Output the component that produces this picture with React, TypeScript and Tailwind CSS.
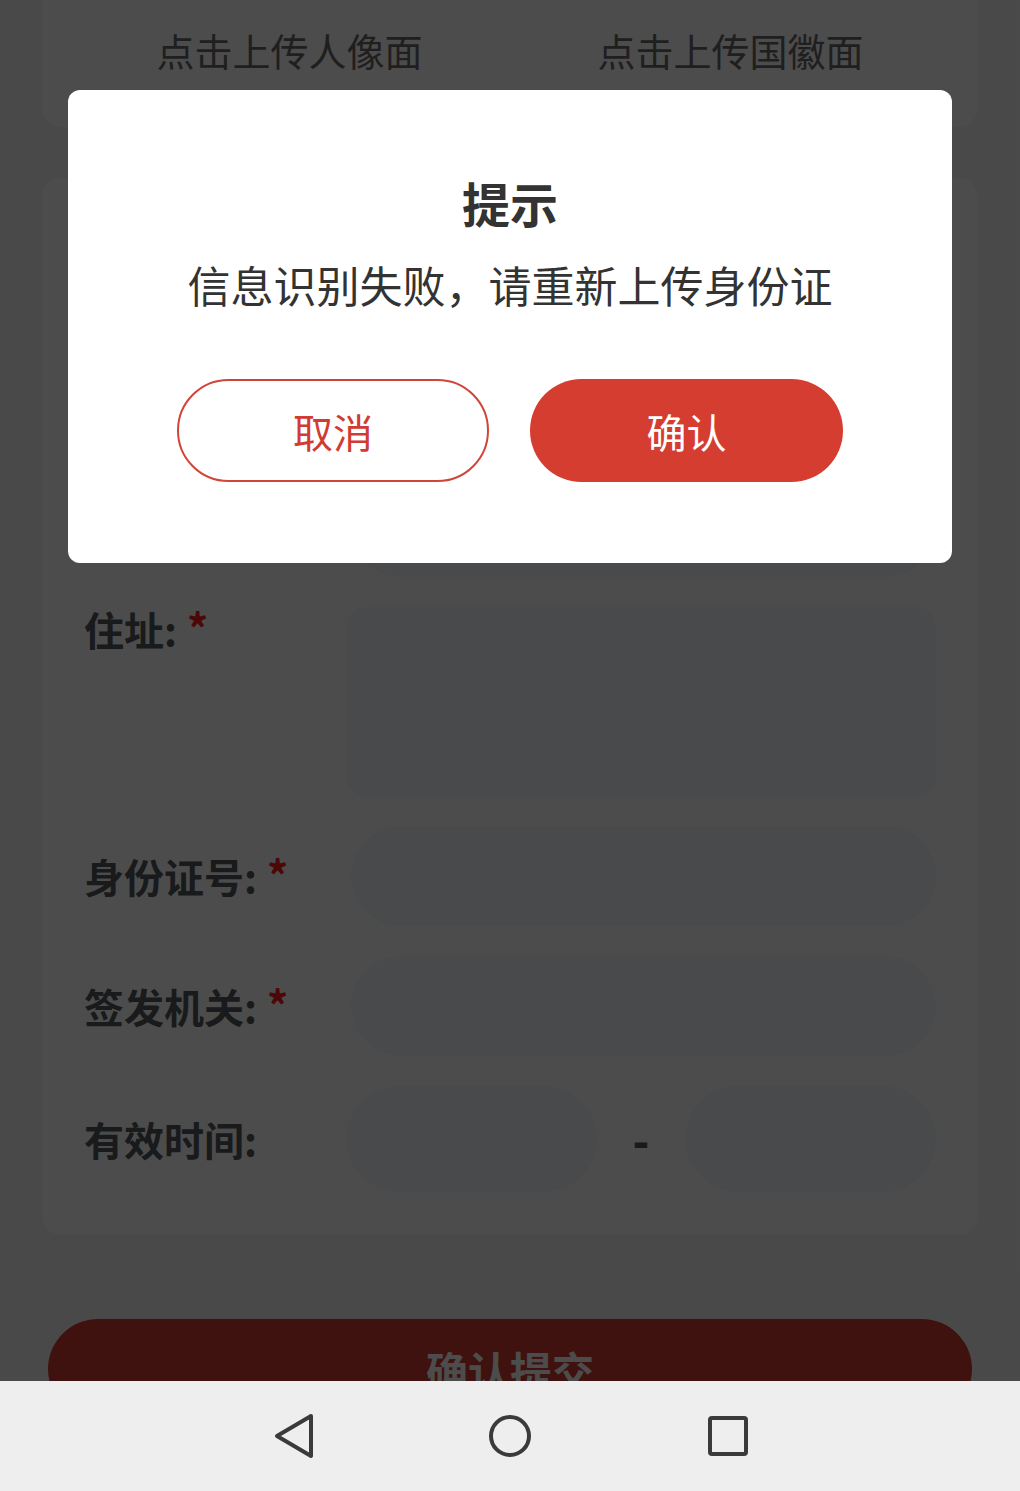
import { useState } from "react";

interface Field {
  label: string;
  required?: boolean;
  kind: "input" | "textarea" | "range";
}

const fields: Field[] = [
  { label: "姓名", required: true, kind: "input" },
  { label: "性别", required: true, kind: "input" },
  { label: "民族", required: true, kind: "input" },
  { label: "住址", required: true, kind: "textarea" },
  { label: "身份证号", required: true, kind: "input" },
  { label: "签发机关", required: true, kind: "input" },
  { label: "有效时间", kind: "range" },
];

function FormRow({ field }: { field: Field }) {
  const isArea = field.kind === "textarea";
  return (
    <div className={`flex ${isArea ? "items-start" : "items-center"}`}>
      <div className="flex w-[262px] shrink-0 items-start text-[40px] font-bold leading-[44px] text-[#55575b]">
        <span>{field.label}:</span>
        {field.required && (
          <span className="ml-[10px] text-[42px] leading-[40px] text-[#ff1a1a]">*</span>
        )}
      </div>

      {field.kind === "input" && (
        <input
          readOnly
          className="ml-[5px] h-[100px] flex-1 rounded-full bg-[#f5f7fa] px-[30px] text-[36px] outline-none"
        />
      )}
      {field.kind === "textarea" && (
        <textarea
          readOnly
          className="h-[189px] flex-1 resize-none rounded-[20px] bg-[#f5f7fa] p-[20px] text-[36px] outline-none"
        />
      )}
      {field.kind === "range" && (
        <div className="flex flex-1 items-center">
          <input
            readOnly
            className="h-[106px] min-w-0 flex-1 rounded-full bg-[#f5f7fa] px-[30px] outline-none"
          />
          <span className="w-[88px] text-center text-[44px] font-black leading-[44px] text-[#55575b]">-</span>
          <input
            readOnly
            className="h-[106px] min-w-0 flex-1 rounded-full bg-[#f5f7fa] px-[30px] outline-none"
          />
        </div>
      )}
    </div>
  );
}

export default function App() {
  const [open, setOpen] = useState(true);

  return (
    <div className="relative h-[1491px] w-full overflow-hidden bg-[#f6f6f6] font-['Noto_Sans_CJK_SC','Noto_Sans',sans-serif]">
      {/* page content (scrolled) */}
      <div className="h-[1381px] overflow-hidden px-[42px]">
        {/* upload card, top scrolled off */}
        <div className="flex h-[127px] justify-center gap-[175px] rounded-b-[20px] bg-white pt-[25px]">
          <span className="text-[38px] leading-[50px] text-[#6a6a6a]">点击上传人像面</span>
          <span className="text-[38px] leading-[50px] text-[#6a6a6a]">点击上传国徽面</span>
        </div>

        {/* info form */}
        <div className="mt-[51px] flex flex-col gap-[30px] rounded-[20px] bg-white pb-[43px] pl-[42px] pr-[42px] pt-[39px]">
          {fields.map((f) => (
            <FormRow key={f.label} field={f} />
          ))}
        </div>

        <button className="mx-[6px] mt-[84px] h-[100px] w-[924px] rounded-full bg-[#d23c32] text-[42px] font-bold text-white">
          确认提交
        </button>
      </div>

      {/* modal */}
      {open && (
        <>
          <div className="absolute inset-x-0 top-0 h-[1381px] bg-black/70" />
          <div className="absolute left-[68px] right-[68px] top-[90px] flex flex-col items-center rounded-[12px] bg-white pb-[81px] pt-[82px]">
            <h2 className="text-[48px] font-bold leading-[60px] text-[#333333]">提示</h2>
            <p className="mt-[26px] text-[43px] leading-[52px] text-[#333333]">
              信息识别失败，请重新上传身份证
            </p>
            <div className="mt-[69px] flex gap-[41px]">
              <button
                onClick={() => setOpen(false)}
                className="h-[103px] w-[312px] rounded-full border-2 border-[#d0453b] bg-white text-[40px] text-[#d03c32]"
              >
                取消
              </button>
              <button
                onClick={() => setOpen(false)}
                className="h-[103px] w-[313px] rounded-full bg-[#d63d31] text-[40px] text-white"
              >
                确认
              </button>
            </div>
          </div>
        </>
      )}

      {/* system nav bar */}
      <div className="flex h-[110px] items-center justify-center gap-[170px] bg-[#eeeeee]">
        <svg width="48" height="48" viewBox="0 0 48 48" fill="none" stroke="#3a3a3a" strokeWidth="4" strokeLinejoin="round">
          <path d="M43 4 L9 24 L43 44 Z" />
        </svg>
        <svg width="48" height="48" viewBox="0 0 48 48" fill="none" stroke="#3a3a3a" strokeWidth="4">
          <circle cx="24" cy="24" r="19" />
        </svg>
        <svg width="48" height="48" viewBox="0 0 48 48" fill="none" stroke="#3a3a3a" strokeWidth="4">
          <rect x="6" y="6" width="36" height="36" rx="2" />
        </svg>
      </div>
    </div>
  );
}
